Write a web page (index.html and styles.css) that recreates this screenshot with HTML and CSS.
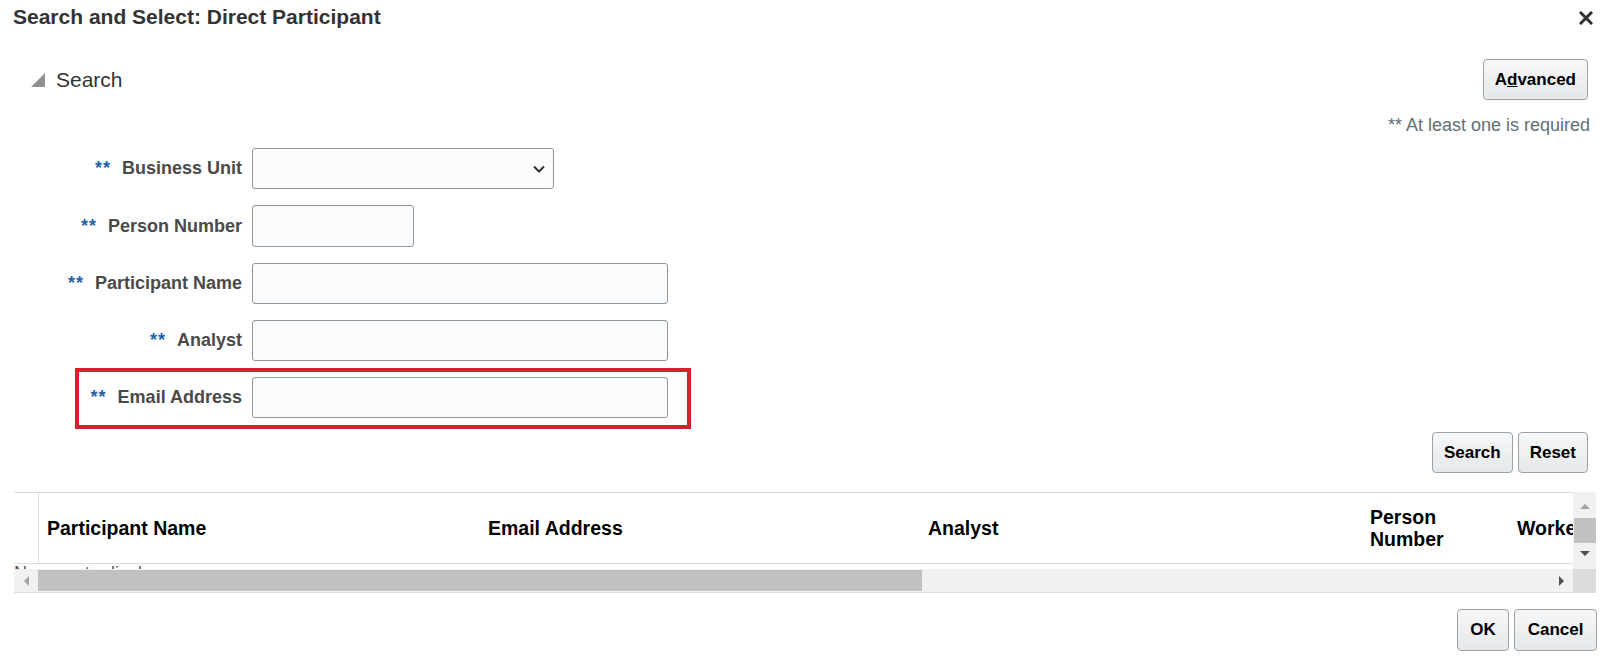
FILE: index.html
```html
<!DOCTYPE html>
<html>
<head>
  <meta charset="utf-8"/>
  <title>Search and Select: Direct Participant</title>
  <link rel="stylesheet" href="styles.css">
</head>
<body>

<div class="dialog">
  <div class="titlebar">
    <h1 class="title">Search and Select: Direct Participant</h1>
    <button class="close" type="button" aria-label="Close">
      <svg width="14" height="14" viewBox="0 0 14 14"><path d="M2 2L12 12M12 2L2 12" stroke="#333" stroke-width="3" stroke-linecap="square"/></svg>
    </button>
  </div>

  <div class="searchHead">
    <div class="disclosure"><span class="tri"></span><span>Search</span></div>
    <button class="btn" type="button">A<u>d</u>vanced</button>
  </div>
  <p class="note">** At least one is required</p>

  <form class="form">
    <div class="row">
      <label class="lbl"><span class="req">**</span>Business Unit</label>
      <div class="field select wBu">
        <svg width="12" height="8" viewBox="0 0 12 8"><path d="M1 1.5L6 6.5L11 1.5" fill="none" stroke="#333" stroke-width="2"/></svg>
      </div>
    </div>
    <div class="row">
      <label class="lbl"><span class="req">**</span>Person Number</label>
      <input class="field wPn" type="text">
    </div>
    <div class="row">
      <label class="lbl"><span class="req">**</span>Participant Name</label>
      <input class="field wWide" type="text">
    </div>
    <div class="row">
      <label class="lbl"><span class="req">**</span>Analyst</label>
      <input class="field wWide" type="text">
    </div>
    <div class="row highlight">
      <label class="lbl"><span class="req">**</span>Email Address</label>
      <input class="field wWide" type="text">
    </div>
  </form>

  <div class="actions searchActions">
    <button class="btn" type="button">Search</button>
    <button class="btn" type="button">Reset</button>
  </div>

  <div class="table">
    <div class="tableMain">
      <div class="tableView">
        <div class="thead">
          <div class="sel"></div>
          <div class="th c1">Participant Name</div>
          <div class="th c2">Email Address</div>
          <div class="th c3">Analyst</div>
          <div class="th c4">Person<br>Number</div>
          <div class="th c5">Worker Type</div>
        </div>
        <div class="tbody">No rows to display.</div>
      </div>
      <div class="vscroll">
        <span class="arrow up"></span>
        <span class="vthumb"></span>
        <span class="arrow down"></span>
      </div>
    </div>
    <div class="hscroll">
      <div class="hbar">
        <span class="hbtn"><span class="arrow left"></span></span>
        <span class="hthumb"></span>
        <span class="hspace"></span>
        <span class="hbtn"><span class="arrow right"></span></span>
      </div>
      <div class="corner"></div>
    </div>
  </div>

  <div class="actions footer">
    <button class="btn" type="button">OK</button>
    <button class="btn" type="button">Cancel</button>
  </div>
</div>

</body>
</html>
```

FILE: styles.css
```css
body {
  margin: 0;
  background-color: #fff;
  color: #333;
  font-family: "Liberation Sans", Arial, sans-serif;
}
.titlebar {
  height: 24px;
  padding: 5px 14px 0 13px;
  display: flex;
  justify-content: space-between;
  align-items: center;
}
.title {
  margin: 0;
  font-size: 21px;
  line-height: 24px;
  font-weight: bold;
  color: #333;
}
.close {
  border: none;
  background: none;
  padding: 0;
  display: flex;
  margin-top: 2px;
}
.searchHead {
  margin-top: 30px;
  padding: 0 19px 0 31px;
  display: flex;
  justify-content: space-between;
  align-items: center;
}
.disclosure {
  display: flex;
  align-items: center;
  gap: 11px;
  font-size: 21px;
  color: #333;
}
.tri {
  width: 0;
  height: 0;
  border-bottom: 14px solid #919191;
  border-left: 14px solid transparent;
}
.btn {
  height: 41px;
  padding: 0 11px;
  border: 1px solid #9da2a6;
  border-radius: 4px;
  background: linear-gradient(#f6f7f8, #e5e8ea);
  font-family: "Liberation Sans", Arial, sans-serif;
  font-size: 17px;
  font-weight: bold;
  color: #000;
}
.note {
  margin: 14px 0 0;
  padding-right: 17px;
  text-align: right;
  font-size: 18px;
  line-height: 22px;
  color: #5f7076;
}
.form {
  margin: 12px 0 0;
  display: flex;
  flex-direction: column;
  gap: 16px;
}
.row {
  position: relative;
  display: flex;
  align-items: center;
}
.lbl {
  width: 242px;
  margin-right: 10px;
  text-align: right;
  font-size: 18px;
  font-weight: bold;
  color: #4a4a4a;
}
.req {
  margin-right: 11px;
  letter-spacing: 1px;
  color: #2463a4;
}
.field {
  box-sizing: border-box;
  height: 41px;
  margin: 0;
  border: 1px solid #8d969c;
  border-radius: 3px;
  background-color: #fbfcfd;
}
.select {
  display: flex;
  justify-content: flex-end;
  align-items: center;
  padding-right: 8px;
}
.wBu { width: 302px; }
.wPn { width: 162px; height: 42px; }
.wWide { width: 416px; }
.highlight::after {
  content: "";
  position: absolute;
  left: 75px;
  top: -9px;
  width: 616px;
  height: 61px;
  box-sizing: border-box;
  border: 4px solid #d3212d;
  pointer-events: none;
}
.actions {
  display: flex;
  justify-content: flex-end;
  gap: 5px;
}
.searchActions {
  margin-top: 14px;
  padding-right: 19px;
}
.table {
  margin: 19px 11px 0 14px;
  border-bottom: 1px solid #dcdcdc;
}
.tableMain {
  display: flex;
}
.tableView {
  flex: 1;
  min-width: 0;
  overflow: hidden;
  border-top: 1px solid #dcdcdc;
}
.thead {
  height: 70px;
  display: flex;
  border-bottom: 1px solid #dcdcdc;
}
.sel {
  flex: none;
  width: 24px;
  border-right: 1px solid #dcdcdc;
}
.th {
  flex: none;
  box-sizing: border-box;
  padding-left: 8px;
  display: flex;
  align-items: center;
  font-size: 19.5px;
  line-height: 22.5px;
  font-weight: bold;
  color: #000;
  white-space: nowrap;
}
.c1 { width: 441px; }
.c2 { width: 440px; }
.c3 { width: 442px; }
.c4 { width: 147px; }
.c5 { width: 300px; }
.tbody {
  height: 5px;
  overflow: hidden;
  font-size: 18px;
  line-height: 19px;
  color: #555;
}
.vscroll {
  flex: none;
  width: 23px;
  padding-top: 12px;
  background-color: #f1f1f1;
  display: flex;
  flex-direction: column;
  align-items: center;
}
.vthumb {
  width: 22px;
  height: 25px;
  margin: 9px 0 8px;
  background-color: #c1c1c1;
}
.arrow {
  width: 0;
  height: 0;
  display: block;
}
.up {
  border-bottom: 5px solid #a3a3a3;
  border-left: 5px solid transparent;
  border-right: 5px solid transparent;
}
.down {
  border-top: 5px solid #505050;
  border-left: 5px solid transparent;
  border-right: 5px solid transparent;
}
.left {
  border-right: 5px solid #a3a3a3;
  border-top: 5px solid transparent;
  border-bottom: 5px solid transparent;
}
.right {
  border-left: 5px solid #505050;
  border-top: 5px solid transparent;
  border-bottom: 5px solid transparent;
}
.hscroll {
  height: 23px;
  display: flex;
}
.hbar {
  flex: 1;
  display: flex;
  align-items: center;
  background-color: #f1f1f1;
}
.hbtn {
  width: 24px;
  display: flex;
  justify-content: center;
}
.hthumb {
  width: 884px;
  height: 21px;
  background-color: #c1c1c1;
}
.hspace {
  flex: 1;
}
.corner {
  width: 23px;
  background-color: #dcdcdc;
}
.footer {
  margin-top: 16px;
  padding-right: 10px;
}
.footer .btn {
  height: 42px;
  padding: 0 12.5px;
}
```
